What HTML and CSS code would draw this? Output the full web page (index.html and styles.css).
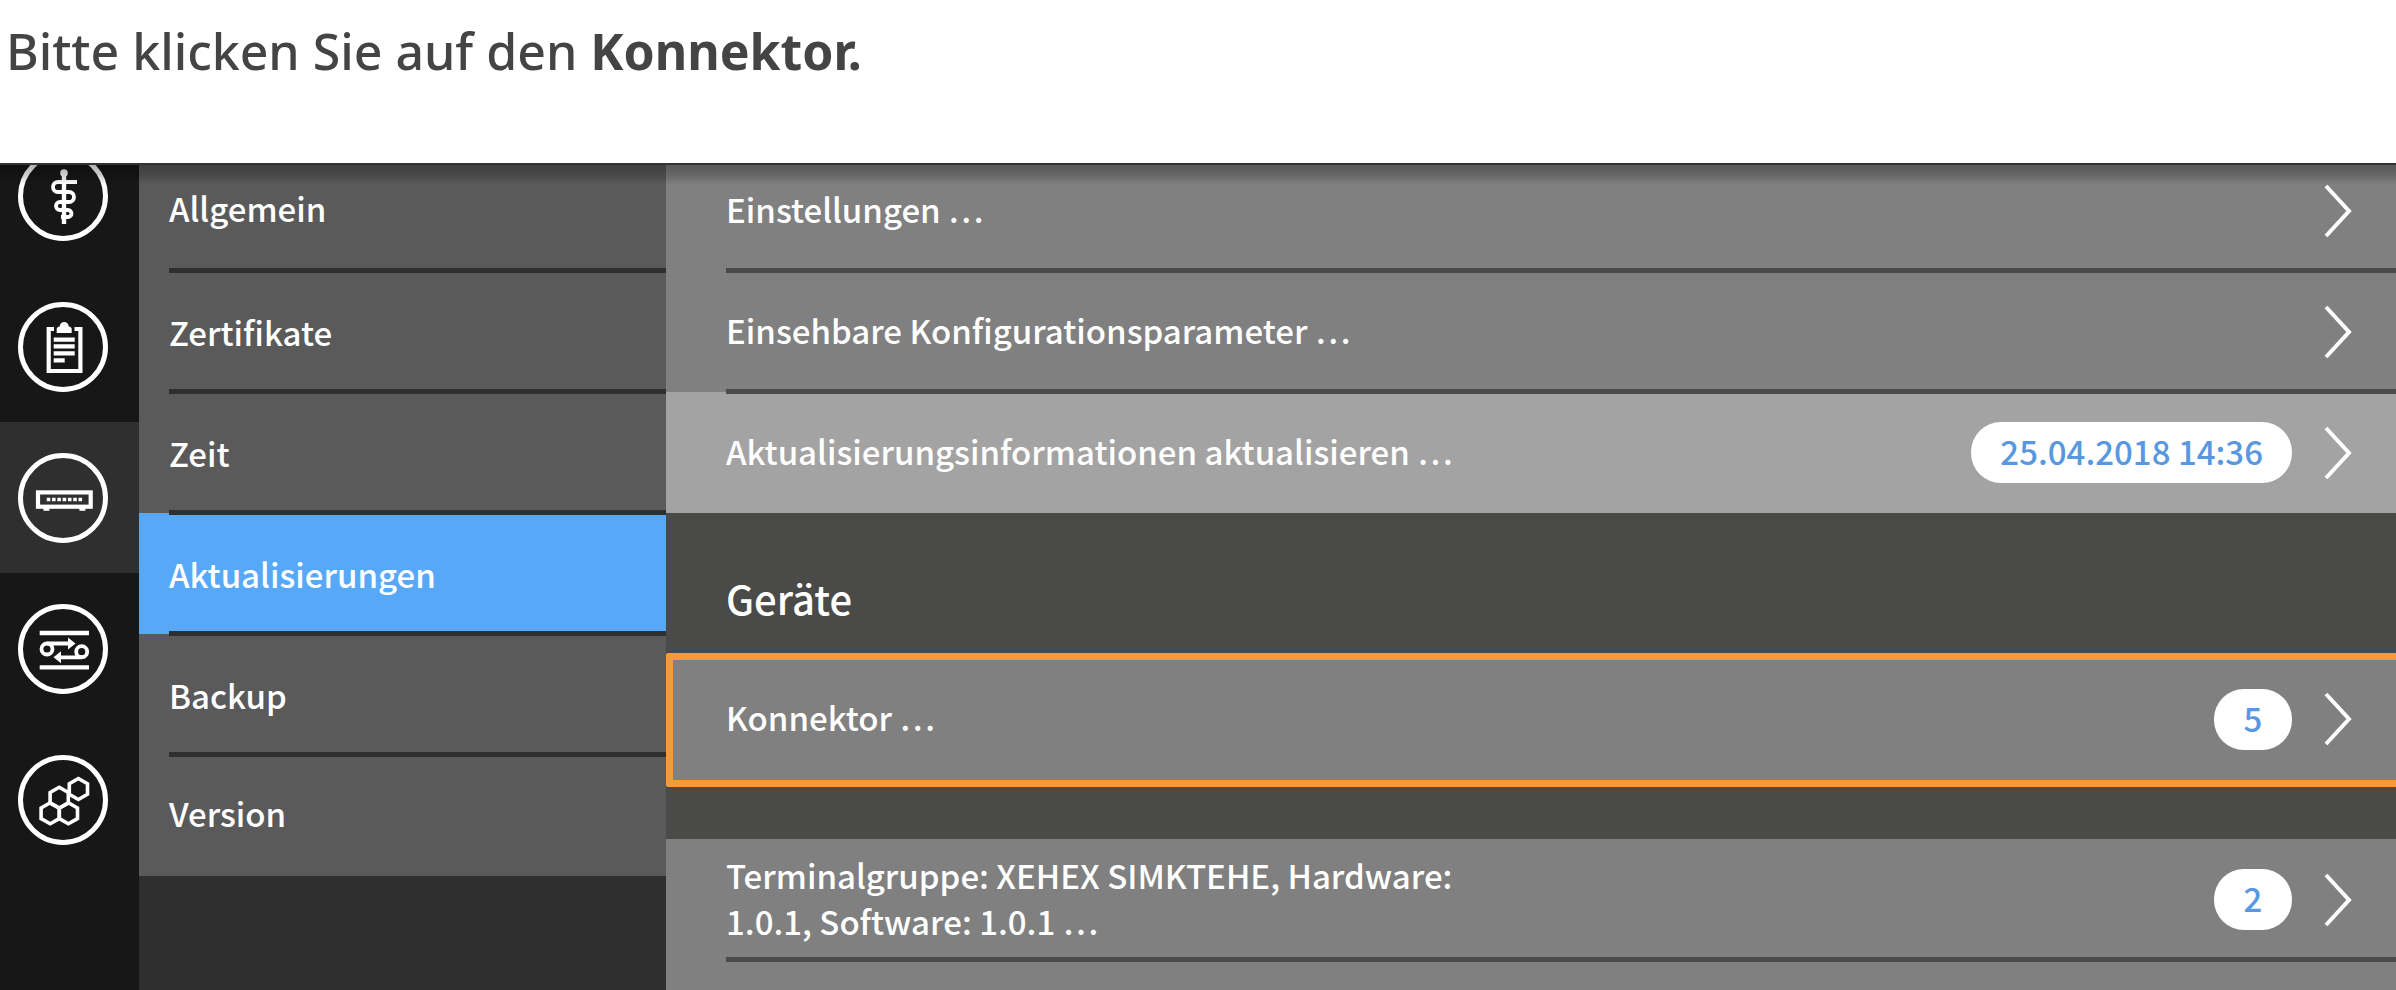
FILE: index.html
```html
<!DOCTYPE html>
<html lang="de">
<head>
<meta charset="utf-8">
<meta name="viewport" content="width=device-width, initial-scale=1">
<title>Aktualisierungen</title>
<link rel="stylesheet" href="styles.css">
</head>
<body>
<p class="instruction">Bitte klicken Sie auf den <strong>Konnektor.</strong></p>
<div class="app">
  <nav class="rail" aria-label="Hauptbereiche">
    <a class="rail-item" href="#praxis" aria-label="Praxis">
      <svg class="rail-icon" viewBox="0 0 92 92"><circle class="ring" cx="46" cy="46" r="42.5"/><g fill="none" stroke="currentColor" stroke-width="3.8"><path d="M47 22V74" stroke-width="4.400"/><path d="M60 32H41a5 5 0 0 0 0 10H52a5 5 0 0 1 0 10H43a4 4 0 0 0 0 8H51a3.500 3.500 0 0 1 0 7H44"/></g><circle cx="47" cy="23" r="3.800" fill="currentColor"/></svg>
    </a>
    <a class="rail-item" href="#protokoll" aria-label="Protokoll">
      <svg class="rail-icon" viewBox="0 0 92 92"><circle class="ring" cx="46" cy="46" r="42.5"/><g fill="none" stroke="currentColor" stroke-width="4.200"><path d="M37 28H31.700V70H63.400V28H57.500"/><path d="M36.700 38.600h21M36.700 45.400h21M36.700 52.300h21M36.700 59.300h11"/></g><path d="M39.700 32V28q0-2 3-2.500a4.500 4.500 0 0 1 9 0q3 .5 3 2.500v4z" fill="currentColor"/></svg>
    </a>
    <a class="rail-item is-active" href="#konnektor" aria-label="Konnektor" aria-current="page">
      <svg class="rail-icon" viewBox="0 0 92 92"><circle class="ring" cx="46" cy="46" r="42.5"/><rect x="21" y="40.400" width="52.700" height="14.300" fill="none" stroke="currentColor" stroke-width="4.200"/><path d="M29.700 47.500H65.500" fill="none" stroke="currentColor" stroke-width="3.600" stroke-dasharray="3.600 1.700"/><path d="M26.400 56h6v2.700h-6zM62.400 56h6v2.700h-6z" fill="currentColor"/></svg>
    </a>
    <a class="rail-item" href="#netzwerk" aria-label="Netzwerk">
      <svg class="rail-icon" viewBox="0 0 92 92"><circle class="ring" cx="46" cy="46" r="42.5"/><g fill="none" stroke="currentColor" stroke-width="3.800"><path d="M22.700 30h49.300M22.700 64.400h49.300" stroke-width="4.400"/><circle cx="30" cy="46" r="5.500"/><circle cx="64.700" cy="48.700" r="5.500"/><path d="M30 40.500H53M65 54.300H42"/></g><path d="M51 34.500l7.500 6-7.500 6zM44 48.300l-7.500 6 7.500 6z" fill="currentColor"/></svg>
    </a>
    <a class="rail-item" href="#module" aria-label="Module">
      <svg class="rail-icon" viewBox="0 0 92 92"><circle class="ring" cx="46" cy="46" r="42.500"/><g fill="none" stroke="currentColor" stroke-width="3.600"><path d="M61.400 24.500l9.100 5.200v10.600l-9.100 5.200-9.100-5.200V29.700z"/><path d="M42.200 33.300l9.100 5.200v10.600l-9.100 5.200-9.100-5.200V38.500z"/><path d="M33.200 48.800l9.100 5.200v10.600l-9.100 5.200-9.100-5.200V54z"/><path d="M51.400 48.800l9.100 5.200v10.600l-9.100 5.200-9.100-5.200V54z"/></g></svg>
    </a>
  </nav>

  <nav class="menu" aria-label="Konnektor">
    <a class="menu-item" href="#allgemein">Allgemein</a>
    <a class="menu-item" href="#zertifikate">Zertifikate</a>
    <a class="menu-item" href="#zeit">Zeit</a>
    <a class="menu-item is-active" href="#aktualisierungen" aria-current="page">Aktualisierungen</a>
    <a class="menu-item" href="#backup">Backup</a>
    <a class="menu-item" href="#version">Version</a>
  </nav>

  <main class="content">
    <section class="rows rows-first">
      <button class="row" type="button"><span class="row-label">Einstellungen …</span><svg class="chevron" viewBox="0 0 28 54"><path d="M2 2L25 27L2 52"/></svg></button>
      <button class="row" type="button"><span class="row-label">Einsehbare Konfigurationsparameter …</span><svg class="chevron" viewBox="0 0 28 54"><path d="M2 2L25 27L2 52"/></svg></button>
      <button class="row row-light" type="button"><span class="row-label">Aktualisierungsinformationen aktualisieren …</span><span class="pill">25.04.2018 14:36</span><svg class="chevron" viewBox="0 0 28 54"><path d="M2 2L25 27L2 52"/></svg></button>
    </section>
    <h2 class="group-title">Geräte</h2>
    <section class="rows">
      <button class="row row-marked" type="button"><span class="row-label">Konnektor …</span><span class="pill">5</span><svg class="chevron" viewBox="0 0 28 54"><path d="M2 2L25 27L2 52"/></svg></button>
    </section>
    <section class="rows rows-spaced">
      <button class="row" type="button"><span class="row-label">Terminalgruppe: XEHEX SIMKTEHE, Hardware: 1.0.1, Software: 1.0.1 …</span><span class="pill">2</span><svg class="chevron" viewBox="0 0 28 54"><path d="M2 2L25 27L2 52"/></svg></button>
      <div class="row"></div>
    </section>
  </main>
</div>
</body>
</html>
```

FILE: styles.css
```css
* {
  box-sizing: border-box;
}

body {
  margin: 0;
  height: 100vh;
  display: flex;
  flex-direction: column;
  overflow: hidden;
  background: #fff;
  font-family: "Noto Sans CJK SC", "Noto Sans", sans-serif;
  font-size: 33px;
  font-weight: 500;
  line-height: 46px;
  color: #fff;
}

.instruction {
  flex: none;
  margin: 0;
  height: 163px;
  padding: 16px 6px;
  color: #444;
  font-family: "Noto Sans", sans-serif;
  font-size: 50px;
  font-weight: 500;
  line-height: 70px;
}

.instruction strong {
  font-weight: 700;
}

.app {
  position: relative;
  flex: 1;
  min-height: 0;
  display: grid;
  grid-template-columns: 139px 527px 1fr;
  border-top: 2px solid #333;
  overflow: hidden;
}

.app::after {
  content: "";
  position: absolute;
  inset: 0 0 auto;
  height: 20px;
  background: linear-gradient(rgba(0, 0, 0, 0.3), rgba(0, 0, 0, 0.2) 50%, rgba(0, 0, 0, 0));
  pointer-events: none;
}

a {
  color: inherit;
  text-decoration: none;
}

.rail {
  background: #171717;
  overflow: hidden;
}

.rail-item {
  display: flex;
  align-items: center;
  height: 151px;
  padding-left: 17px;
}

.rail-item:first-child {
  margin-top: -45px;
}

.rail-item.is-active {
  background: #2f2f2f;
}

.rail-icon {
  width: 92px;
  height: 92px;
}

.ring {
  fill: none;
  stroke: #fff;
  stroke-width: 5;
}

.menu {
  background: #2f2f2f;
  overflow: hidden;
}

.menu-item {
  position: relative;
  display: flex;
  align-items: center;
  height: 121px;
  padding: 0 30px;
  background: #5a5a5a;
}

.menu-item:first-child {
  margin-top: -15px;
}

.menu-item:first-child,
.menu-item:last-child {
  padding-bottom: 5px;
}

.menu-item.is-active {
  background: #58a8f8;
}

.menu-item + .menu-item::before,
.row + .row::before {
  content: "";
  position: absolute;
  top: -3px;
  left: 30px;
  right: 0;
  height: 5px;
  background: #2f2f2f;
}

.content {
  background: #4a4a48;
  overflow: hidden;
}

.rows {
  display: flex;
  flex-direction: column;
}

.rows-first {
  margin-top: -15px;
}

.rows-spaced {
  margin-top: 52px;
}

.row {
  position: relative;
  display: flex;
  align-items: center;
  gap: 32px;
  min-height: 121px;
  margin: 0;
  padding: 0 44px 0 60px;
  border: 0;
  background: #808080;
  color: inherit;
  font: inherit;
  text-align: left;
}

.row + .row::before {
  left: 60px;
  background: #4a4a48;
}

.row-light {
  background: #a3a3a3;
}

.row-marked {
  min-height: 134px;
  padding: 0 44px 2px 53px;
  border: 7px solid #f89838;
  border-right: 0;
  border-radius: 3px 0 0 3px;
}

.row-label {
  max-width: 760px;
  margin-right: auto;
  padding-bottom: 4px;
}

.pill {
  min-width: 78px;
  padding: 6px 29px 9px;
  border-radius: 30px;
  background: #fff;
  color: #5898e0;
  text-align: center;
  line-height: 46px;
}

.chevron {
  flex: none;
  width: 28px;
  height: 54px;
  fill: none;
  stroke: #fff;
  stroke-width: 4;
}

.group-title {
  margin: 0;
  height: 140px;
  padding: 55px 60px 0;
  font-size: 40px;
  font-weight: 500;
  line-height: 60px;
}
```
